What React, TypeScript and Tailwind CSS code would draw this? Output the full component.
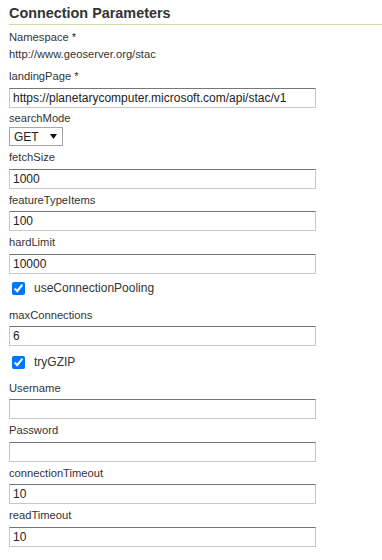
import React from "react";

const FONT = { fontFamily: '"Liberation Sans", Arial, sans-serif' };

interface FieldProps {
  label: string;
  value: string;
  className?: string;
}

function Field({ label, value, className }: FieldProps) {
  return (
    <div className={className}>
      <div className="text-[11.2px] leading-[15px] text-[#333]">{label}</div>
      <input
        readOnly
        value={value}
        className="mt-[3.5px] block h-[20px] w-[307px] border border-[#c8c8c8] border-t-[#767676] bg-white px-[3px] text-[12px] text-[#222] outline-none"
        style={FONT}
      />
    </div>
  );
}

function Check({ label, className }: { label: string; className?: string }) {
  return (
    <label className={`flex items-center ${className ?? ""}`}>
      <input type="checkbox" defaultChecked className="ml-[3px] h-[13px] w-[13px] accent-[#0075ff]" />
      <span className="ml-[9px] text-[12px] leading-[15px] text-[#333]">{label}</span>
    </label>
  );
}

export default function App() {
  return (
    <div className="min-h-[560px] bg-white pl-[9px]" style={FONT}>
      <h3 className="border-b border-[#c9e19b] pt-[5px] pb-[2px] text-[14.4px] font-bold leading-[17px] text-[#333]">
        Connection Parameters
      </h3>

      <div className="mt-[5px] text-[11.2px] leading-[15px] text-[#333]">Namespace *</div>
      <div className="mt-[2px] text-[11.2px] leading-[15px] text-[#333]">http://www.geoserver.org/stac</div>

      <Field
        className="mt-[7px]"
        label="landingPage *"
        value="https://planetarycomputer.microsoft.com/api/stac/v1"
      />

      <div className="mt-[3.5px] text-[11.2px] leading-[15px] text-[#333]">searchMode</div>
      <div className="mt-[1px] flex h-[19px] w-[54px] items-center border border-[#a6a6a6] bg-white pl-[4px]">
        <span className="text-[12px] text-[#222]">GET</span>
        <svg className="ml-[11px]" width="7" height="5" viewBox="0 0 7 5">
          <path d="M0 0 H7 L3.5 5 Z" fill="#111" />
        </svg>
      </div>

      <Field className="mt-[4px]" label="fetchSize" value="1000" />
      <Field className="mt-[4px]" label="featureTypeItems" value="100" />
      <Field className="mt-[4px]" label="hardLimit" value="10000" />

      <Check className="mt-[7.5px]" label="useConnectionPooling" />

      <Field className="mt-[11.5px]" label="maxConnections" value="6" />

      <Check className="mt-[8.5px]" label="tryGZIP" />

      <Field className="mt-[11px]" label="Username" value="" />
      <Field className="mt-[4px]" label="Password" value="" />
      <Field className="mt-[4px]" label="connectionTimeout" value="10" />
      <Field className="mt-[4px]" label="readTimeout" value="10" />
    </div>
  );
}
